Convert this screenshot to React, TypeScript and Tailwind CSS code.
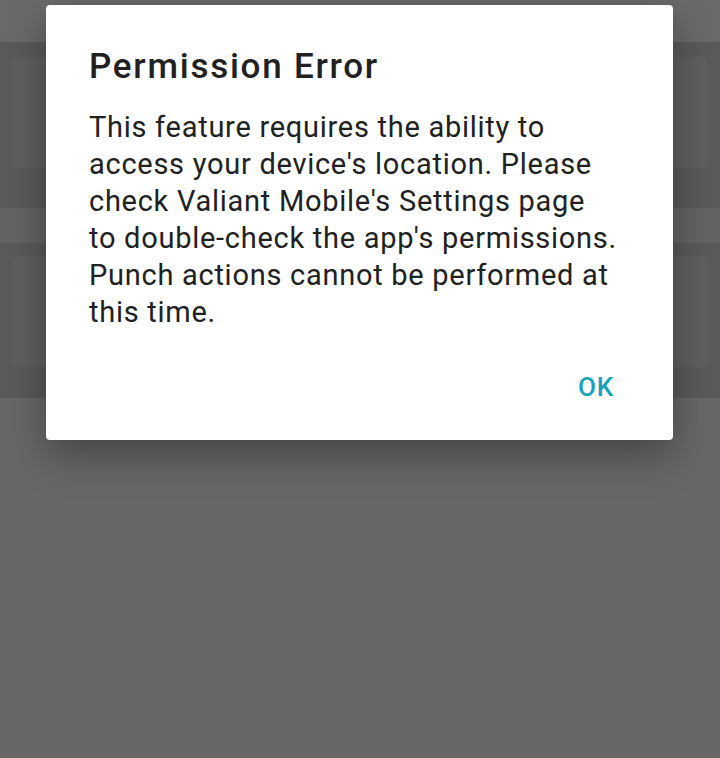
export default function App() {
  const lines = [
    "This feature requires the ability to",
    "access your device's location. Please",
    "check Valiant Mobile's Settings page",
    "to double-check the app's permissions.",
    "Punch actions cannot be performed at",
    "this time.",
  ];

  return (
    <div
      className="relative w-[720px] h-[758px] overflow-hidden bg-[#676767]"
      style={{ fontFamily: "Roboto, 'Noto Sans', sans-serif" }}
    >
      {/* dimmed page underneath */}
      <div className="flex flex-col">
        <div className="h-[42px] bg-[#6a6a6a]" />
        <div className="h-[166px] bg-[#5a5a5a] px-3 pt-[15px]">
          <div className="h-[111px] rounded-md bg-[#5f5f5f]" />
        </div>
        <div className="h-[35px] bg-[#636363]" />
        <div className="h-[155px] bg-[#5a5a5a] px-3 pt-[13px]">
          <div className="h-[111px] rounded-md bg-[#5f5f5f]" />
        </div>
      </div>

      {/* dialog */}
      <div className="absolute left-[46px] top-[5px] w-[627px] h-[435px] rounded-[4px] bg-white shadow-[0_14px_40px_rgba(0,0,0,0.35)] flex flex-col pt-[42px] px-[43px]">
        <h2 className="text-[35px] leading-[40px] font-medium tracking-[0.05em] text-[#212121] whitespace-nowrap">
          Permission Error
        </h2>
        <p className="mt-[22px] text-[29px] leading-[37px] tracking-[0.025em] text-[#212121] whitespace-nowrap">
          {lines.map((l) => (
            <span key={l} className="block">
              {l}
            </span>
          ))}
        </p>
        <div className="mt-[38px] flex justify-end pr-[16px]">
          <button className="text-[26px] leading-[36px] font-medium tracking-[0.03em] text-[#17a2b8]">
            OK
          </button>
        </div>
      </div>
    </div>
  );
}
